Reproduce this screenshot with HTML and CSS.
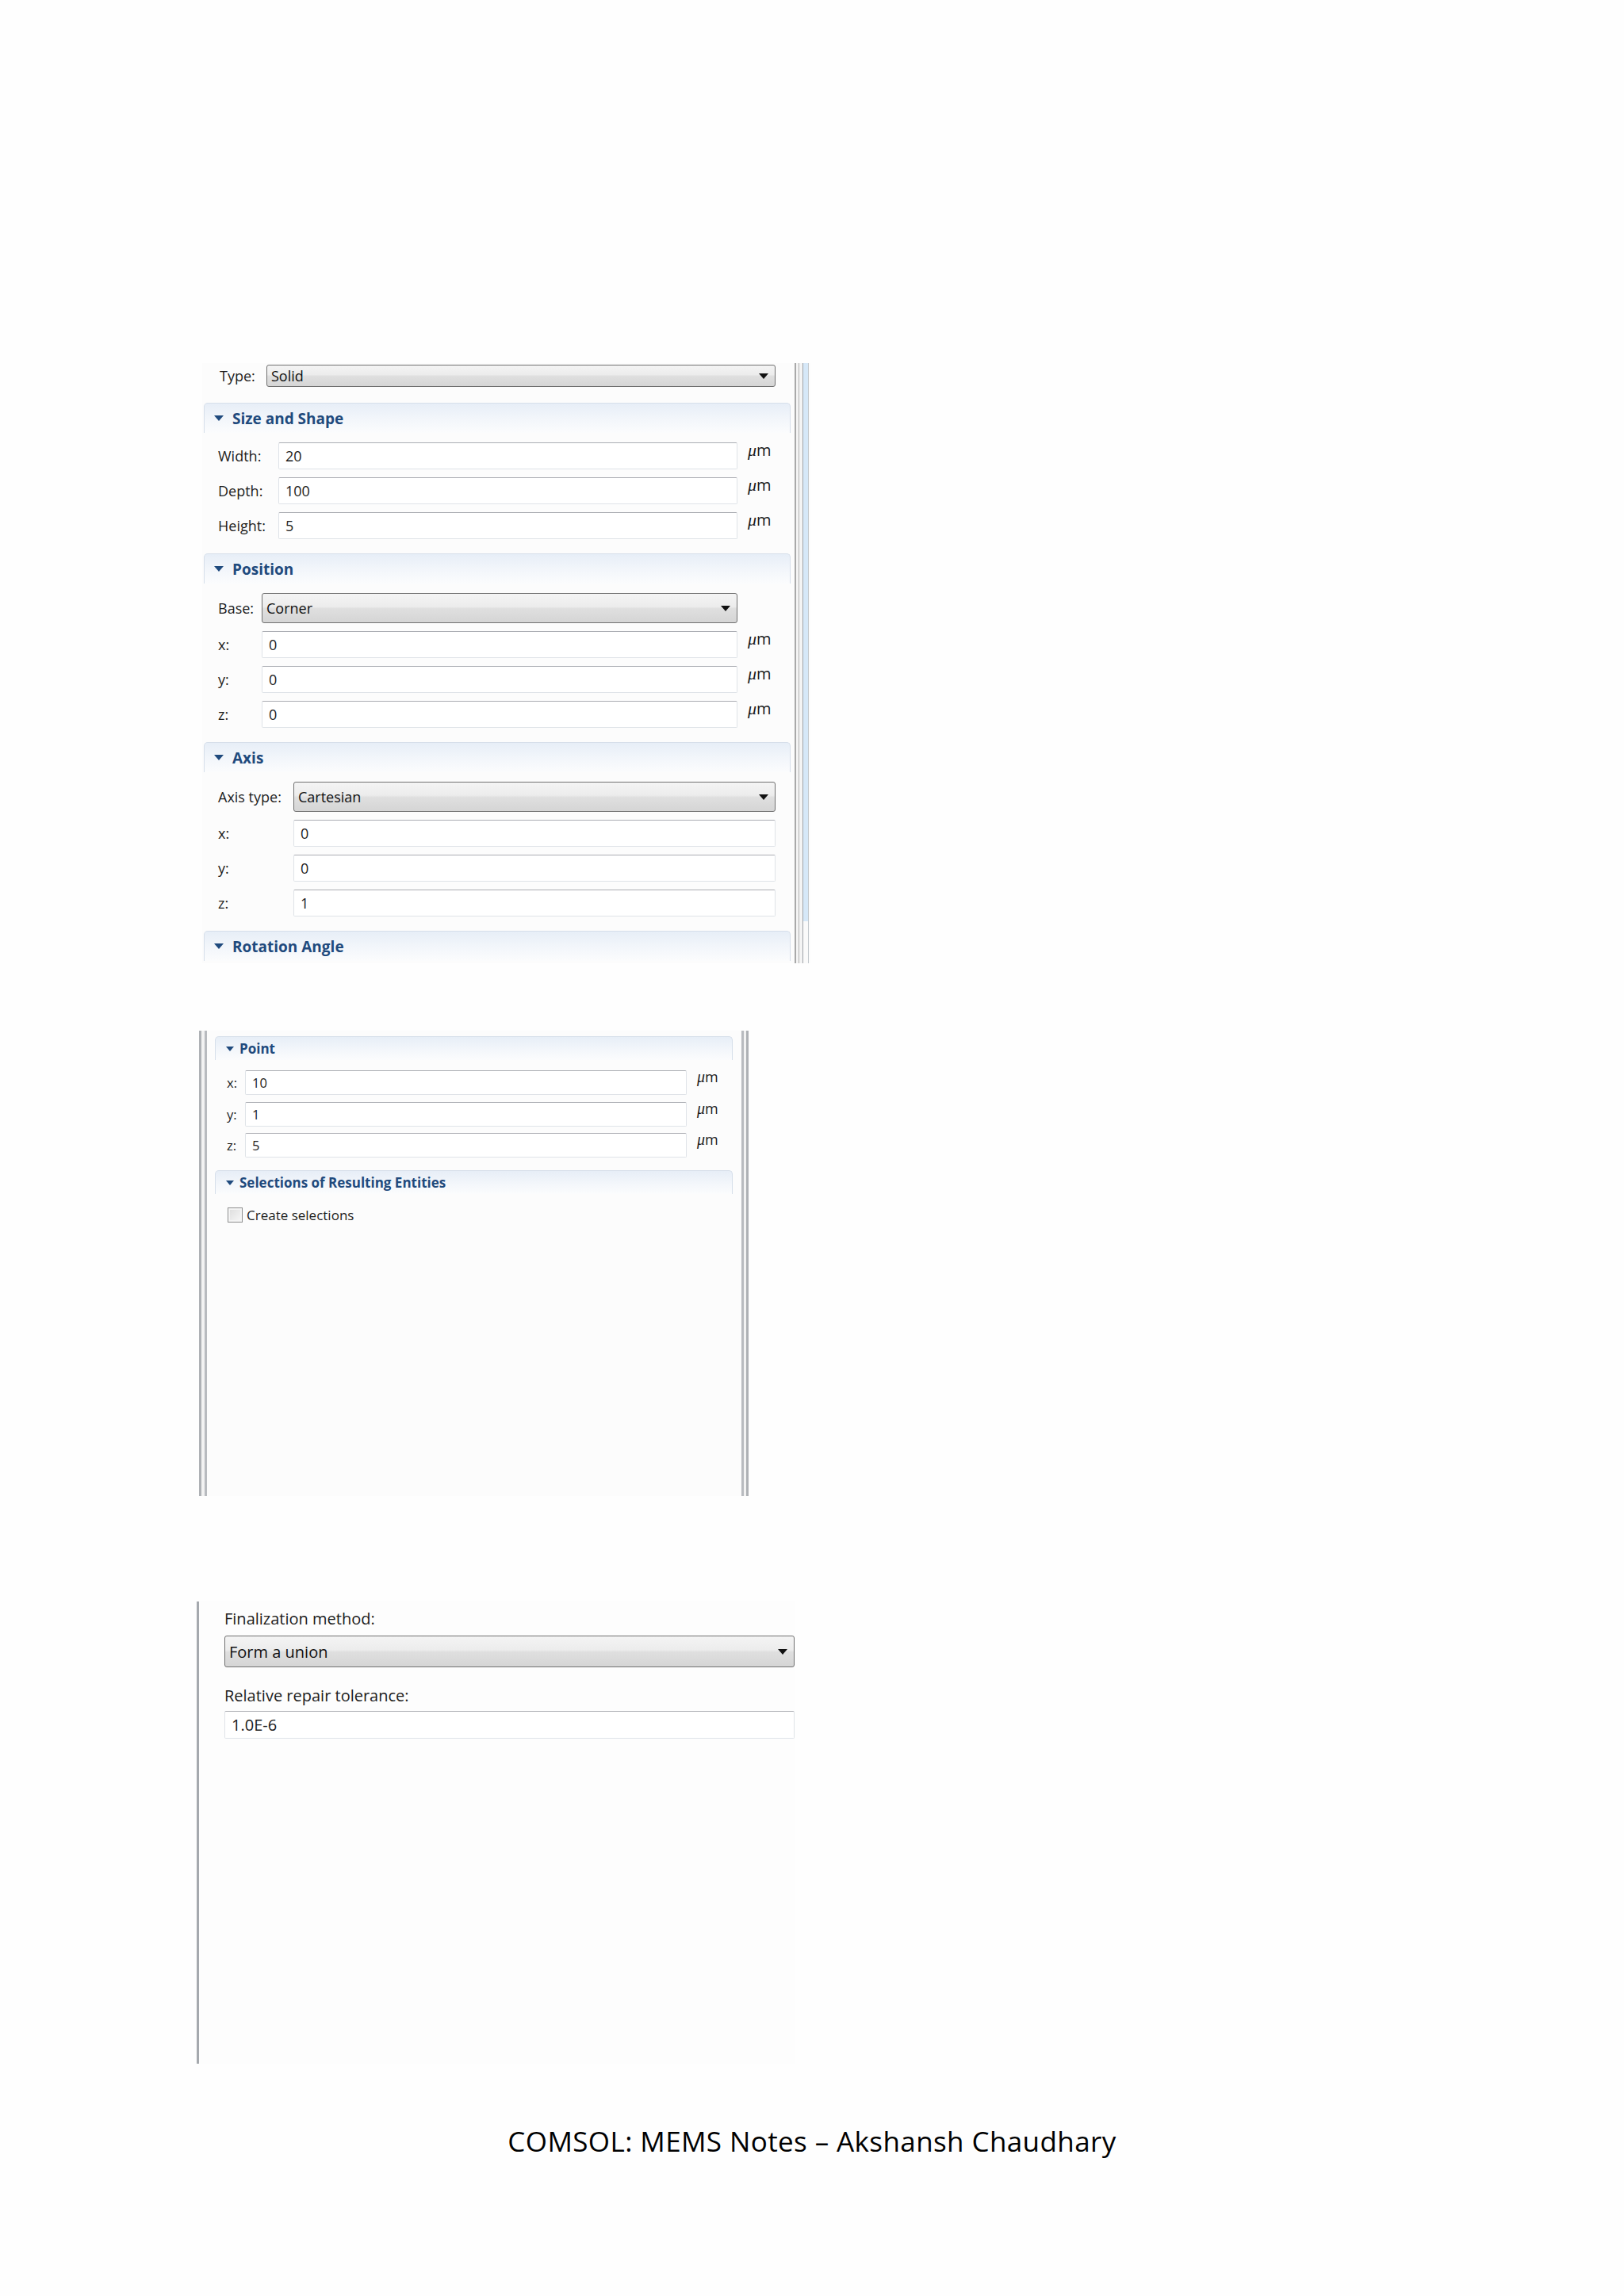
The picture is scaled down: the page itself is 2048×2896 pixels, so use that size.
FILE: index.html
```html
<!DOCTYPE html>
<html lang="en">
<head>
  <meta charset="UTF-8" />
  <meta name="viewport" content="width=device-width, initial-scale=1.0"/>
  <title>COMSOL: MEMS Notes</title>
  <link rel="stylesheet" href="styles.css">
</head>
<body>

<div class="page">

  <!-- Block settings -->
  <div class="geom">
    <div class="geom-body">
      <div class="row type-row">
        <span class="lbl">Type:</span>
        <div class="combo">Solid</div>
      </div>

      <div class="sec-head"><span class="caret"></span>Size and Shape</div>
      <div class="sec-body size">
        <div class="row"><span class="lbl">Width:</span><div class="field">20</div><span class="unit"><i>μ</i>m</span></div>
        <div class="row"><span class="lbl">Depth:</span><div class="field">100</div><span class="unit"><i>μ</i>m</span></div>
        <div class="row"><span class="lbl">Height:</span><div class="field">5</div><span class="unit"><i>μ</i>m</span></div>
      </div>

      <div class="sec-head"><span class="caret"></span>Position</div>
      <div class="sec-body pos">
        <div class="row tall"><span class="lbl">Base:</span><div class="combo">Corner</div><span class="unit"></span></div>
        <div class="row"><span class="lbl">x:</span><div class="field">0</div><span class="unit"><i>μ</i>m</span></div>
        <div class="row"><span class="lbl">y:</span><div class="field">0</div><span class="unit"><i>μ</i>m</span></div>
        <div class="row"><span class="lbl">z:</span><div class="field">0</div><span class="unit"><i>μ</i>m</span></div>
      </div>

      <div class="sec-head"><span class="caret"></span>Axis</div>
      <div class="sec-body axis">
        <div class="row tall"><span class="lbl">Axis type:</span><div class="combo">Cartesian</div></div>
        <div class="row"><span class="lbl">x:</span><div class="field">0</div></div>
        <div class="row"><span class="lbl">y:</span><div class="field">0</div></div>
        <div class="row"><span class="lbl">z:</span><div class="field">1</div></div>
      </div>

      <div class="sec-head"><span class="caret"></span>Rotation Angle</div>
    </div>
    <div class="vscroll">
      <div class="track"></div>
      <div class="track-end"></div>
    </div>
  </div>

  <!-- Point settings -->
  <div class="point">
    <div class="sec-head"><span class="caret"></span>Point</div>
    <div class="sec-body">
      <div class="row"><span class="lbl">x:</span><div class="field">10</div><span class="unit"><i>μ</i>m</span></div>
      <div class="row"><span class="lbl">y:</span><div class="field">1</div><span class="unit"><i>μ</i>m</span></div>
      <div class="row"><span class="lbl">z:</span><div class="field">5</div><span class="unit"><i>μ</i>m</span></div>
    </div>
    <div class="sec-head"><span class="caret"></span>Selections of Resulting Entities</div>
    <div class="check-row">
      <span class="checkbox"></span>Create selections
    </div>
  </div>

  <!-- Form union settings -->
  <div class="final">
    <div class="caption">Finalization method:</div>
    <div class="combo">Form a union</div>
    <div class="caption second">Relative repair tolerance:</div>
    <div class="field">1.0E-6</div>
  </div>

  <div class="footer">COMSOL: MEMS Notes – Akshansh Chaudhary</div>

</div>

</body>
</html>
```

FILE: styles.css
```css
body {
  margin: 0;
  background: #fefefe;
  font-family: 'Open Sans', 'Noto Sans', sans-serif;
  color: #1c1c1c;
}

.page {
  padding-top: 458px;
  padding-bottom: 120px;
}

/* shared controls */
.row {
  display: flex;
  align-items: center;
  height: 34px;
  font-size: 18px;
}

.row + .row {
  margin-top: 10px;
}

.row.tall {
  height: 38px;
}

.lbl {
  flex: none;
}

.field {
  flex: 1;
  align-self: stretch;
  display: flex;
  align-items: center;
  box-sizing: border-box;
  padding-left: 8px;
  background: #fff;
  border: 1px solid #dfe3e8;
  border-top-color: #abadb3;
  border-radius: 2px;
}

.combo {
  flex: 1;
  align-self: stretch;
  display: flex;
  align-items: center;
  position: relative;
  box-sizing: border-box;
  padding-left: 5px;
  border: 1px solid #707070;
  border-radius: 3px;
  background: linear-gradient(#f4f4f4, #ececec 45%, #dfdfdf 52%, #d5d5d5);
  color: #111;
}

.combo::after {
  content: "";
  position: absolute;
  right: 8px;
  top: 50%;
  margin-top: -3px;
  border-left: 6px solid transparent;
  border-right: 6px solid transparent;
  border-top: 7px solid #111;
}

.unit {
  flex: none;
  width: 48px;
  box-sizing: border-box;
  padding-left: 13px;
  align-self: flex-start;
  margin-top: -4px;
  font-size: 20px;
}

.unit i {
  font-family: 'Liberation Serif', serif;
  font-size: 22px;
}

.sec-head {
  display: flex;
  align-items: center;
  height: 38px;
  box-sizing: border-box;
  padding-left: 12px;
  border: 1px solid #d6dfea;
  border-bottom: none;
  border-radius: 5px 5px 0 0;
  background: linear-gradient(#e7eef7, #f4f7fb 60%, #fbfcfd);
  color: #1f4a7d;
  font-size: 19px;
  font-weight: bold;
}

.caret {
  width: 0;
  height: 0;
  margin-right: 11px;
  border-left: 6px solid transparent;
  border-right: 6px solid transparent;
  border-top: 7px solid #1f4a7d;
}

/* first panel: block geometry */
.geom {
  display: flex;
  margin-left: 255px;
  width: 767px;
  height: 757px;
  background: #fcfcfc;
}

.geom-body {
  width: 740px;
  margin-left: 2px;
}

.type-row {
  height: 32px;
  padding: 0 19px 0 20px;
}

.type-row .lbl {
  width: 59px;
}

.type-row .combo {
  height: 28px;
  align-self: center;
}

.geom .sec-head {
  margin-top: 18px;
}

.geom .sec-body {
  padding: 12px 19px 0 18px;
}

.geom .sec-body + .sec-head {
  margin-top: 18px;
}

.size .lbl { width: 76px; }
.pos .lbl { width: 55px; }
.axis .lbl { width: 95px; }

.axis {
  padding-bottom: 3px;
}

.vscroll {
  display: flex;
  flex-direction: column;
  width: 20px;
  margin-left: 5px;
}

.track,
.track-end {
  background: linear-gradient(to right, #a9a9a9 0 2px, #f4f4f4 2px 5px, #b3b3b3 5px 6px, #f4f4f4 6px 10px, #9fa3a8 10px 11px, #d6e8f8 11px 17px, #c2c7cc 17px 18px, transparent 18px);
}

.track {
  flex: 1;
}

.track-end {
  height: 53px;
  background: linear-gradient(to right, #a9a9a9 0 2px, #f4f4f4 2px 5px, #b3b3b3 5px 6px, #f4f4f4 6px 10px, #9fa3a8 10px 11px, #fafafa 11px 17px, #c2c7cc 17px 18px, transparent 18px);
}

/* second panel: point */
.point {
  margin-top: 85px;
  margin-left: 251px;
  width: 693px;
  height: 587px;
  box-sizing: border-box;
  padding: 7px 20px 0;
  background:
    linear-gradient(to right, #aeb1b5 0 3px, #f2f2f2 3px 7px, #b8bbbf 7px 10px, transparent 10px) left / 10px 100% no-repeat,
    linear-gradient(to left, #aeb1b5 0 3px, #f2f2f2 3px 6px, #b8bbbf 6px 9px, transparent 9px) right / 10px 100% no-repeat,
    #fcfcfc;
}

.point .sec-head {
  height: 30px;
  padding-left: 13px;
  font-size: 17px;
}

.point .caret {
  margin-right: 7px;
  border-left-width: 5px;
  border-right-width: 5px;
  border-top-width: 6px;
}

.point .sec-body {
  padding: 13px 0 16px 15px;
}

.point .row {
  height: 31px;
  font-size: 16.5px;
}

.point .row + .row {
  margin-top: 8.5px;
}

.point .lbl {
  width: 23px;
}

.point .unit {
  width: 58px;
  padding-left: 13px;
  font-size: 18px;
}

.point .unit i {
  font-size: 20px;
}

.check-row {
  display: flex;
  align-items: center;
  padding: 15px 0 0 16px;
  font-size: 17px;
}

.checkbox {
  width: 19px;
  height: 19px;
  box-sizing: border-box;
  margin-right: 5px;
  border: 1px solid #8e8f8f;
  background: linear-gradient(135deg, #dcdcdc, #f8f8f8);
  box-shadow: inset 0 0 0 2px #f4f4f4;
}

/* third panel: form union */
.final {
  margin-top: 133px;
  margin-left: 248px;
  width: 754px;
  height: 583px;
  box-sizing: border-box;
  padding: 8px 0 0 32px;
  border-left: 3px solid #a5a9ae;
  background: #fdfdfd;
  font-size: 20px;
}

.caption {
  line-height: 28px;
}

.caption.second {
  margin-top: 22px;
}

.final .combo {
  margin-top: 7px;
  height: 40px;
}

.final .field {
  margin-top: 5px;
  height: 35px;
}

.footer {
  margin-top: 74px;
  text-align: center;
  font-size: 35px;
  line-height: 48px;
  letter-spacing: 0.4px;
  color: #000;
}
```
